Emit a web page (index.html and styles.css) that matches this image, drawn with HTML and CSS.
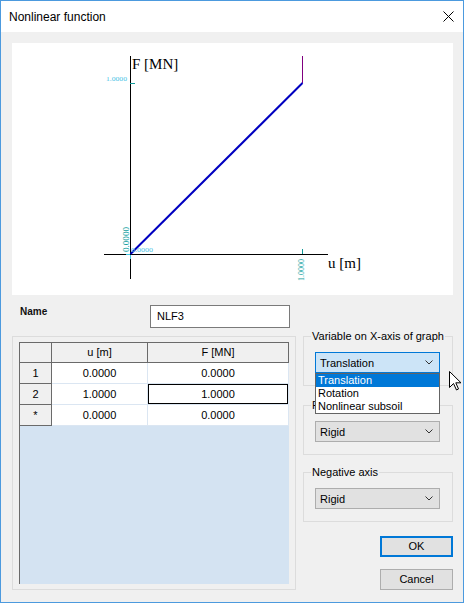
FILE: index.html
```html
<!DOCTYPE html>
<html>
<head>
<meta charset="utf-8">
<link rel="stylesheet" href="styles.css">
</head>
<body>
<div class="dialog">
  <div class="titlebar">
    <span class="title">Nonlinear function</span>
    <svg class="close" width="11" height="11" viewBox="0 0 11 11"><path d="M0.5 0.5 L10.5 10.5 M10.5 0.5 L0.5 10.5" stroke="#000" stroke-width="1"/></svg>
  </div>
  <div class="body">
    <div class="graph">
      <svg width="441" height="252" viewBox="12 43 441 252">
        <line x1="130.5" y1="56" x2="130.5" y2="279" stroke="#000" stroke-width="1"/>
        <line x1="104" y1="254.5" x2="328" y2="254.5" stroke="#000" stroke-width="1"/>
        <line x1="302.5" y1="56" x2="302.5" y2="83" stroke="#800080" stroke-width="1"/>
        <line x1="130.5" y1="254" x2="302.5" y2="83" stroke="#0000c0" stroke-width="2"/>
        <line x1="130" y1="83.5" x2="135" y2="83.5" stroke="#129a9a" stroke-width="1"/>
        <line x1="302.5" y1="249" x2="302.5" y2="254" stroke="#129a9a" stroke-width="1"/>
        <line x1="126" y1="254.5" x2="130" y2="254.5" stroke="#40c4e0" stroke-width="1"/>
        <line x1="130.5" y1="255" x2="130.5" y2="259" stroke="#40c4e0" stroke-width="1"/>
        <text class="axis-title" x="132" y="69">F [MN]</text>
        <text class="axis-title" x="328" y="268">u [m]</text>
        <text class="tick light" x="106" y="81" textLength="21" lengthAdjust="spacingAndGlyphs">1.0000</text>
        <text class="tick light" x="131" y="252" textLength="22" lengthAdjust="spacingAndGlyphs">0.0000</text>
        <text class="tick teal" transform="translate(128.5 252) rotate(-90)" textLength="25" lengthAdjust="spacingAndGlyphs">0.0000</text>
        <text class="tick teal" transform="translate(303.5 281) rotate(-90)" textLength="22" lengthAdjust="spacingAndGlyphs">1.0000</text>
      </svg>
    </div>
    <div class="lower">
      <div class="leftcol">
        <div class="namerow">
          <span class="namelabel">Name</span>
          <div class="input">NLF3</div>
        </div>
        <div class="tablegroup">
          <div class="gridwrap">
            <div class="grid">
              <div class="hd corner"></div>
              <div class="hd">u [m]</div>
              <div class="hd">F [MN]</div>
              <div class="rh">1</div>
              <div class="cell">0.0000</div>
              <div class="cell">0.0000</div>
              <div class="rh">2</div>
              <div class="cell">1.0000</div>
              <div class="cell selected">1.0000</div>
              <div class="rh">*</div>
              <div class="cell">0.0000</div>
              <div class="cell">0.0000</div>
            </div>
          </div>
        </div>
      </div>
      <div class="rightcol">
        <fieldset class="group g1">
          <legend>Variable on X-axis of graph</legend>
          <div class="combowrap">
            <div class="combo focused"><span>Translation</span><svg class="chev" width="8" height="5" viewBox="0 0 8 5"><path d="M0.5 0.5 L4 4 L7.5 0.5" fill="none" stroke="#333" stroke-width="1"/></svg></div>
            <div class="dropdown">
              <div class="item active">Translation</div>
              <div class="item">Rotation</div>
              <div class="item">Nonlinear subsoil</div>
            </div>
          </div>
        </fieldset>
        <fieldset class="group g2">
          <legend>Positive axis</legend>
          <div class="combo"><span>Rigid</span><svg class="chev" width="8" height="5" viewBox="0 0 8 5"><path d="M0.5 0.5 L4 4 L7.5 0.5" fill="none" stroke="#333" stroke-width="1"/></svg></div>
        </fieldset>
        <fieldset class="group g3">
          <legend>Negative axis</legend>
          <div class="combo"><span>Rigid</span><svg class="chev" width="8" height="5" viewBox="0 0 8 5"><path d="M0.5 0.5 L4 4 L7.5 0.5" fill="none" stroke="#333" stroke-width="1"/></svg></div>
        </fieldset>
        <div class="btn ok">OK</div>
        <div class="btn cancel">Cancel</div>
      </div>
    </div>
  </div>
  <svg class="cursor" width="13" height="20" viewBox="0 0 13 20"><path d="M0.5 0.5 L0.5 16.5 L4.5 12.5 L7.5 19 L9.5 18 L6.8 11.8 L12 11.8 Z" fill="#fff" stroke="#000" stroke-width="1" stroke-linejoin="miter"/></svg>
</div>
</body>
</html>
```
FILE: styles.css
```css
* { box-sizing: border-box; }
body {
  margin: 0;
  background: #ffffff;
  font-family: "Liberation Sans", Arial, sans-serif;
  font-size: 11px;
  color: #000;
}
.dialog {
  width: 464px;
  height: 603px;
  border: 1px solid #4c9ade;
  background: #f0f0f0;
  position: relative;
}
.titlebar {
  height: 31px;
  background: #fff;
  display: flex;
  align-items: center;
  justify-content: space-between;
  padding: 0 9px 0 8px;
}
.title {
  font-size: 12px;
  line-height: 16px;
  padding-top: 1px;
}
.close { display: block; margin-top: -1px; }
.body {
  padding: 11px 10px 0 11px;
}
.graph {
  width: 441px;
  height: 252px;
  background: #fff;
}
.graph svg { display: block; }
.axis-title {
  font-family: "Liberation Serif", "Times New Roman", serif;
  font-size: 15px;
  fill: #000;
}
.tick {
  font-family: "Liberation Serif", "Times New Roman", serif;
  font-size: 7px;
}
.tick.light { fill: #4cc4e6; }
.tick.teal { fill: #12a0a0; font-size: 8px; }
.lower {
  display: flex;
  gap: 7px;
  align-items: flex-start;
}
.leftcol { width: 284px; }
.namerow {
  margin-top: 10px;
  height: 23px;
  display: flex;
  align-items: flex-start;
  justify-content: space-between;
  padding: 0 6px 0 8px;
}
.namelabel {
  font-size: 10px;
  font-weight: bold;
  line-height: 14px;
  padding-top: 0;
  color: #111;
}
.input {
  width: 140px;
  height: 23px;
  border: 1px solid #7a7a7a;
  background: #fff;
  padding-left: 6px;
  line-height: 21px;
}
.tablegroup {
  margin-top: 8px;
  height: 254px;
  border: 1px solid #dcdcdc;
  padding: 5px 6px;
}
.gridwrap {
  height: 242px;
  background: #d4e3f2;
  border-left: 1px solid #6a6a6a;
}
.grid {
  display: grid;
  grid-template-columns: 32px 96px 141px;
  grid-auto-rows: 21px;
  text-align: center;
}
.grid > div { line-height: 20px; }
.hd {
  background: #f0f0f0;
  border-top: 1px solid #6a6a6a;
  border-bottom: 1px solid #6a6a6a;
  border-right: 1px solid #6a6a6a;
  line-height: 19px !important;
}
.rh {
  background: #f0f0f0;
  border-right: 1px solid #6a6a6a;
  border-bottom: 1px solid #6a6a6a;
}
.cell {
  background: #fff;
  border-right: 1px solid #dbe6f2;
  border-bottom: 1px solid #dbe6f2;
}
.cell.selected { box-shadow: inset 0 0 0 1px #000; }
.rightcol {
  width: 150px;
  padding-top: 34px;
  display: flex;
  flex-direction: column;
}
.group {
  margin: 0;
  border: 1px solid #dcdcdc;
  padding: 9px 11px 12px 11px;
  min-width: 0;
  width: 150px;
}
.group legend {
  font-size: 11px;
  line-height: 14px;
  padding: 0 1px;
  margin-left: -4px;
  white-space: nowrap;
}
.g1 { margin-bottom: 12px; }
.g2 { margin-bottom: 10px; }
.combowrap { position: relative; }
.combo {
  width: 125px;
  height: 21px;
  border: 1px solid #adadad;
  background: #e1e1e1;
  display: flex;
  align-items: center;
  justify-content: space-between;
  padding: 0 6px 0 4px;
}
.combo.focused {
  background: #cce4f7;
  border-color: #0078d7;
}
.chev { display: block; }
.dropdown {
  position: absolute;
  left: 0;
  top: 100%;
  width: 125px;
  background: #fff;
  border: 1px solid #646464;
  padding: 0;
  z-index: 2;
}
.item {
  height: 13px;
  line-height: 13px;
  padding-left: 2px;
}
.item.active {
  background: #0078d7;
  color: #fff;
}
.btn {
  align-self: flex-end;
  width: 73px;
  height: 21px;
  background: #e1e1e1;
  border: 1px solid #adadad;
  text-align: center;
  line-height: 19px;
}
.btn.ok {
  margin-top: 14px;
  border: 2px solid #0078d7;
  line-height: 17px;
}
.btn.cancel { margin-top: 12px; }
.cursor {
  position: absolute;
  left: 448px;
  top: 370px;
  z-index: 3;
}
```
